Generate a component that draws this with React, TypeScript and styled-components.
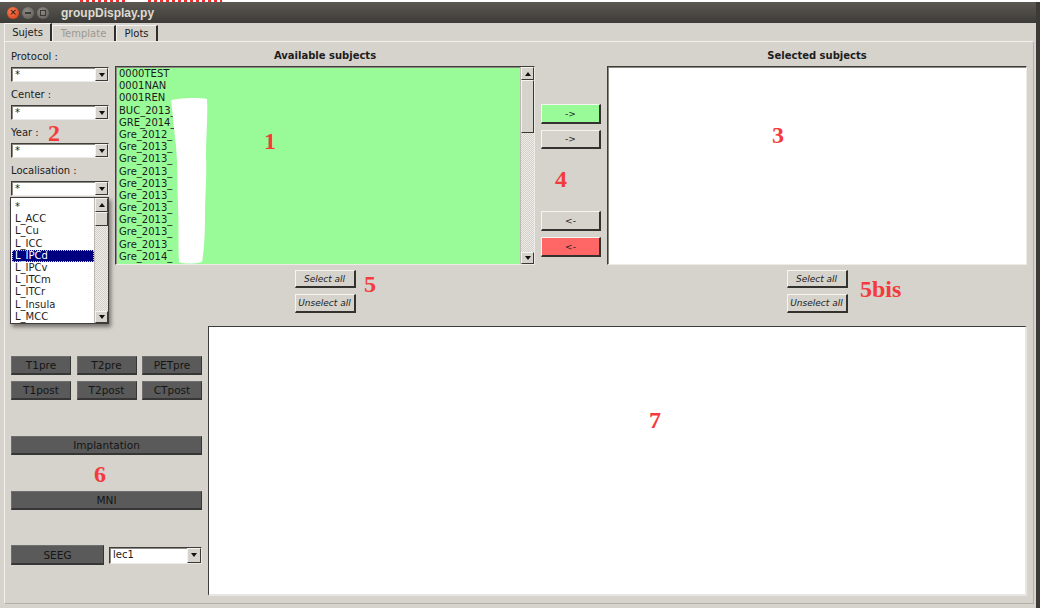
import React from "react";
import styled, { createGlobalStyle, css } from "styled-components";

const Global = createGlobalStyle`
  html, body { margin: 0; padding: 0; background: #ffffff; }
  body {
    font-family: "DejaVu Sans", "Noto Sans", sans-serif;
    font-size: 10px;
    color: #1c1c1c;
    width: 1040px;
    height: 608px;
    overflow: hidden;
  }
  * { box-sizing: border-box; }
`;

const BG = "#d6d2cc";

const Root = styled.div`
  position: relative;
  width: 1040px;
  height: 608px;
`;

const TopStrip = styled.div`
  height: 2px;
  display: flex;
  background: #fff;
`;

const Dash = styled.div<{ $left: number; $w: number }>`
  margin-left: ${(p) => p.$left}px;
  width: ${(p) => p.$w}px;
  height: 2px;
  background: repeating-linear-gradient(90deg, #f03030 0 3px, transparent 3px 6px);
`;

const Window = styled.div`
  width: 1040px;
  height: 606px;
  display: flex;
  flex-direction: column;
  background: ${BG};
  border-right: 4px solid #3b3a36;
`;

const TitleBar = styled.div`
  height: 21px;
  flex: none;
  display: flex;
  align-items: center;
  padding-left: 7px;
  gap: 3px;
  background: linear-gradient(#5c5953, #3d3b37);
`;

const WinButton = styled.div<{ $kind: "close" | "min" | "max" }>`
  width: 12px;
  height: 12px;
  border-radius: 50%;
  display: flex;
  align-items: center;
  justify-content: center;
  font-size: 9px;
  line-height: 1;
  font-weight: bold;
  ${(p) =>
    p.$kind === "close"
      ? css`
          background: radial-gradient(circle at 40% 35%, #f7875f, #e0491f 70%);
          color: #4a1e0e;
        `
      : css`
          background: radial-gradient(circle at 40% 35%, #8d8a84, #6b6863 70%);
          color: #3b3935;
        `}
`;

const MinBar = styled.div`
  width: 6px;
  height: 2px;
  background: #3b3935;
`;

const MaxBox = styled.div`
  width: 6px;
  height: 6px;
  border: 1px solid #3b3935;
`;

const Title = styled.div`
  margin-left: 9px;
  font-family: "Liberation Sans", Arial, sans-serif;
  font-weight: bold;
  font-size: 12px;
  color: #dfdbd2;
`;

const TabBar = styled.div`
  height: 18px;
  flex: none;
  display: flex;
  align-items: flex-end;
  padding-left: 4px;
`;

const Tab = styled.div<{ $active?: boolean; $disabled?: boolean; $w: number }>`
  width: ${(p) => p.$w}px;
  height: ${(p) => (p.$active ? 18 : 16)}px;
  display: flex;
  align-items: center;
  justify-content: center;
  font-size: 10px;
  color: ${(p) => (p.$disabled ? "#9d998f" : "#1c1c1c")};
  border-top: 1px solid #f4f2ee;
  border-left: 1px solid #f4f2ee;
  border-right: 2px solid #2f2e2b;
  background: ${BG};
`;

const Pane = styled.div`
  flex: 1;
  margin: 0 2px 4px 4px;
  border: 1px solid #b4b0a8;
  border-top-color: #f2f0ec;
  border-left-color: #f2f0ec;
  padding: 2px 0 0 6px;
  display: grid;
  grid-template-rows: 282px 270px;
`;

const TopRow = styled.div`
  display: flex;
  gap: 6px;
  align-items: flex-start;
`;

const FilterColumn = styled.div`
  width: 98px;
  display: flex;
  flex-direction: column;
  position: relative;
`;

const FieldLabel = styled.div`
  height: 23px;
  padding-top: 1px;
  display: flex;
  align-items: center;
  font-size: 10px;
`;

const Combo = styled.div<{ $w?: number; $h?: number }>`
  width: ${(p) => p.$w ?? 98}px;
  height: ${(p) => p.$h ?? 15}px;
  display: flex;
  background: #fff;
  border: 1px solid;
  border-color: #3f3d39 #ecebe7 #ecebe7 #3f3d39;
  box-shadow: inset 1px 1px 0 #8c8882;
`;

const ComboText = styled.div`
  flex: 1;
  padding-left: 3px;
  font-size: 10px;
  line-height: 13px;
  overflow: hidden;
`;

const ArrowBox = styled.div<{ $w?: number }>`
  width: ${(p) => p.$w ?? 13}px;
  flex: none;
  display: flex;
  align-items: center;
  justify-content: center;
  background: ${BG};
  border: 1px solid;
  border-color: #f5f3ef #3a3834 #3a3834 #f5f3ef;
`;

const Tri = styled.div<{ $up?: boolean }>`
  width: 0;
  height: 0;
  border-left: 3px solid transparent;
  border-right: 3px solid transparent;
  ${(p) =>
    p.$up ? `border-bottom: 4px solid #111;` : `border-top: 4px solid #111;`}
`;

const Popup = styled.div`
  position: absolute;
  left: -1px;
  top: 153px;
  width: 99px;
  height: 127px;
  display: flex;
  background: #fff;
  border: 1px solid #3f3d39;
  box-shadow: 2px 3px 4px rgba(0, 0, 0, 0.45);
  z-index: 2;
`;

const PopupItems = styled.div`
  flex: 1;
  padding: 3px 0 0 1px;
  overflow: hidden;
`;

const PopupItem = styled.div<{ $selected?: boolean }>`
  height: 12.2px;
  line-height: 12.2px;
  padding-left: 3px;
  font-size: 10px;
  white-space: nowrap;
  ${(p) =>
    p.$selected &&
    css`
      background: #000080;
      color: #fff;
      outline: 1px dotted #c8c8ff;
      outline-offset: -1px;
    `}
`;

const ScrollBar = styled.div<{ $w: number }>`
  width: ${(p) => p.$w}px;
  flex: none;
  display: flex;
  flex-direction: column;
  border-left: 1px solid #bdb9b2;
`;

const ScrollArrow = styled.div<{ $h: number }>`
  height: ${(p) => p.$h}px;
  flex: none;
  display: flex;
  align-items: center;
  justify-content: center;
  background: ${BG};
  border: 1px solid;
  border-color: #f5f3ef #3a3834 #3a3834 #f5f3ef;
`;

const ScrollThumb = styled.div<{ $h: number }>`
  height: ${(p) => p.$h}px;
  flex: none;
  background: ${BG};
  border: 1px solid;
  border-color: #f5f3ef #3a3834 #3a3834 #f5f3ef;
`;

const ScrollTrough = styled.div`
  flex: 1;
  background-color: #eceae6;
  background-image: repeating-conic-gradient(#d2cec8 0 25%, #eeece8 0 50%);
  background-size: 2px 2px;
`;

const ListColumn = styled.div`
  width: 420px;
  display: flex;
  flex-direction: column;
`;

const ColumnHeader = styled.div`
  height: 22px;
  display: flex;
  align-items: center;
  justify-content: center;
  font-weight: bold;
  font-size: 10px;
`;

const ListBox = styled.div<{ $green?: boolean }>`
  height: 199px;
  display: flex;
  background: ${(p) => (p.$green ? "#98fb98" : "#ffffff")};
  border: 1px solid;
  border-color: #3f3d39 #ecebe7 #ecebe7 #3f3d39;
  box-shadow: inset 1px 1px 0 #8c8882;
`;

const ListItems = styled.div`
  flex: 1;
  padding: 1px 0 0 3px;
  overflow: hidden;
`;

const Item = styled.div`
  height: 12.2px;
  line-height: 12.2px;
  font-size: 10px;
  white-space: nowrap;
`;

const SelectButtons = styled.div`
  margin-top: 5px;
  display: flex;
  flex-direction: column;
  align-items: center;
  gap: 6px;
`;

const LightButton = styled.div<{ $bg?: string; $w: number; $h: number; $italic?: boolean }>`
  width: ${(p) => p.$w}px;
  height: ${(p) => p.$h}px;
  display: flex;
  align-items: center;
  justify-content: center;
  background: ${(p) => p.$bg ?? BG};
  border: 1px solid;
  border-color: #f7f5f2 #34322e #34322e #f7f5f2;
  border-right-width: 2px;
  border-bottom-width: 2px;
  font-size: 9px;
  font-style: ${(p) => (p.$italic ? "italic" : "normal")};
  color: #222;
`;

const TransferColumn = styled.div`
  width: 60px;
  padding-top: 60px;
  display: flex;
  flex-direction: column;
  gap: 6px;
`;

const TransferGap = styled.div`
  height: 50px;
`;

const BottomRow = styled.div`
  display: flex;
  gap: 6px;
  align-items: flex-start;
`;

const ActionColumn = styled.div`
  width: 191px;
  padding-top: 30px;
  display: flex;
  flex-direction: column;
`;

const ButtonGrid = styled.div`
  display: grid;
  grid-template-columns: repeat(3, 60px);
  column-gap: 5.5px;
  row-gap: 6px;
`;

const ActionButton = styled.div<{ $w?: number; $top?: number; $h?: number }>`
  width: ${(p) => (p.$w ? `${p.$w}px` : "100%")};
  height: ${(p) => p.$h ?? 19}px;
  margin-top: ${(p) => p.$top ?? 0}px;
  display: flex;
  align-items: center;
  justify-content: center;
  background: #5a5a5a;
  border: 1px solid;
  border-color: #6e6e6e #363636 #363636 #6e6e6e;
  border-bottom-width: 2px;
  font-size: 10.5px;
  color: #151515;
`;

const SeegRow = styled.div`
  margin-top: 35px;
  display: flex;
  align-items: center;
  gap: 5px;
`;

const PlotArea = styled.div`
  width: 819px;
  height: 270px;
  background: #fff;
  border: 1px solid;
  border-color: #3f3d39 #e8e6e2 #e8e6e2 #3f3d39;
  border-right-width: 2px;
  border-bottom-width: 2px;
`;

const Annotation = styled.div<{ $x: number; $y: number }>`
  position: absolute;
  left: ${(p) => p.$x}px;
  top: ${(p) => p.$y}px;
  font-family: "Liberation Serif", "Times New Roman", serif;
  font-weight: bold;
  font-size: 24px;
  line-height: 24px;
  color: #f43a3a;
  z-index: 3;
`;

const Redaction = styled.svg`
  position: absolute;
  left: 166px;
  top: 96px;
  z-index: 2;
`;

const subjects = [
  "0000TEST",
  "0001NAN",
  "0001REN",
  "BUC_2013_",
  "GRE_2014_",
  "Gre_2012_",
  "Gre_2013_",
  "Gre_2013_",
  "Gre_2013_",
  "Gre_2013_",
  "Gre_2013_",
  "Gre_2013_",
  "Gre_2013_",
  "Gre_2013_",
  "Gre_2013_",
  "Gre_2014_",
];

const locs = ["*", "L_ACC", "L_Cu", "L_ICC", "L_IPCd", "L_IPCv", "L_ITCm", "L_ITCr", "L_Insula", "L_MCC"];

function Filter({ label }: { label: string }) {
  return (
    <>
      <FieldLabel>{label}</FieldLabel>
      <Combo>
        <ComboText>*</ComboText>
        <ArrowBox>
          <Tri />
        </ArrowBox>
      </Combo>
    </>
  );
}

export default function App() {
  return (
    <Root>
      <Global />
      <TopStrip>
        <Dash $left={80} $w={46} />
        <Dash $left={22} $w={74} />
      </TopStrip>
      <Window>
        <TitleBar>
          <WinButton $kind="close">×</WinButton>
          <WinButton $kind="min">
            <MinBar />
          </WinButton>
          <WinButton $kind="max">
            <MaxBox />
          </WinButton>
          <Title>groupDisplay.py</Title>
        </TitleBar>
        <TabBar>
          <Tab $active $w={48}>Sujets</Tab>
          <Tab $disabled $w={64}>Template</Tab>
          <Tab $w={42}>Plots</Tab>
        </TabBar>
        <Pane>
          <TopRow>
            <FilterColumn>
              <Filter label="Protocol :" />
              <Filter label="Center :" />
              <Filter label="Year :" />
              <Filter label="Localisation :" />
              <Popup>
                <PopupItems>
                  {locs.map((l) => (
                    <PopupItem key={l} $selected={l === "L_IPCd"}>
                      {l}
                    </PopupItem>
                  ))}
                </PopupItems>
                <ScrollBar $w={14}>
                  <ScrollArrow $h={14}>
                    <Tri $up />
                  </ScrollArrow>
                  <ScrollThumb $h={14} />
                  <ScrollTrough />
                  <ScrollArrow $h={12}>
                    <Tri />
                  </ScrollArrow>
                </ScrollBar>
              </Popup>
            </FilterColumn>

            <ListColumn>
              <ColumnHeader>Available subjects</ColumnHeader>
              <ListBox $green>
                <ListItems>
                  {subjects.map((s, i) => (
                    <Item key={i}>{s}</Item>
                  ))}
                </ListItems>
                <ScrollBar $w={14}>
                  <ScrollArrow $h={13}>
                    <Tri $up />
                  </ScrollArrow>
                  <ScrollThumb $h={53} />
                  <ScrollTrough />
                  <ScrollArrow $h={12}>
                    <Tri />
                  </ScrollArrow>
                </ScrollBar>
              </ListBox>
              <SelectButtons>
                <LightButton $w={61} $h={18} $italic>Select all</LightButton>
                <LightButton $w={61} $h={19} $italic>Unselect all</LightButton>
              </SelectButtons>
            </ListColumn>

            <TransferColumn>
              <LightButton $w={60} $h={20} $bg="#98fb98">-&gt;</LightButton>
              <LightButton $w={60} $h={19}>-&gt;</LightButton>
              <TransferGap />
              <LightButton $w={60} $h={20}>&lt;-</LightButton>
              <LightButton $w={60} $h={20} $bg="#ff6666">&lt;-</LightButton>
            </TransferColumn>

            <ListColumn>
              <ColumnHeader>Selected subjects</ColumnHeader>
              <ListBox />
              <SelectButtons>
                <LightButton $w={61} $h={18} $italic>Select all</LightButton>
                <LightButton $w={61} $h={19} $italic>Unselect all</LightButton>
              </SelectButtons>
            </ListColumn>
          </TopRow>

          <BottomRow>
            <ActionColumn>
              <ButtonGrid>
                <ActionButton>T1pre</ActionButton>
                <ActionButton>T2pre</ActionButton>
                <ActionButton>PETpre</ActionButton>
                <ActionButton>T1post</ActionButton>
                <ActionButton>T2post</ActionButton>
                <ActionButton>CTpost</ActionButton>
              </ButtonGrid>
              <ActionButton $top={36}>Implantation</ActionButton>
              <ActionButton $top={36}>MNI</ActionButton>
              <SeegRow>
                <ActionButton $w={93} $h={20}>SEEG</ActionButton>
                <Combo $w={93} $h={17}>
                  <ComboText>lec1</ComboText>
                  <ArrowBox $w={14}>
                    <Tri />
                  </ArrowBox>
                </Combo>
              </SeegRow>
            </ActionColumn>
            <PlotArea />
          </BottomRow>
        </Pane>
      </Window>

      <Redaction width="44" height="170" viewBox="0 0 44 170">
        <path
          d="M5 4 C14 2 32 1 41 3 C42 20 40 40 40 60 C41 80 39 100 39 120 C39 140 38 155 36 166 C28 168 18 168 13 166 C12 150 13 130 12 110 C11 90 12 70 10 50 C8 35 7 20 5 4 Z"
          fill="#ffffff"
        />
      </Redaction>

      <Annotation $x={264} $y={129}>1</Annotation>
      <Annotation $x={48} $y={121}>2</Annotation>
      <Annotation $x={772} $y={123}>3</Annotation>
      <Annotation $x={555} $y={167}>4</Annotation>
      <Annotation $x={364} $y={272}>5</Annotation>
      <Annotation $x={860} $y={277}>5bis</Annotation>
      <Annotation $x={94} $y={462}>6</Annotation>
      <Annotation $x={649} $y={408}>7</Annotation>
    </Root>
  );
}
